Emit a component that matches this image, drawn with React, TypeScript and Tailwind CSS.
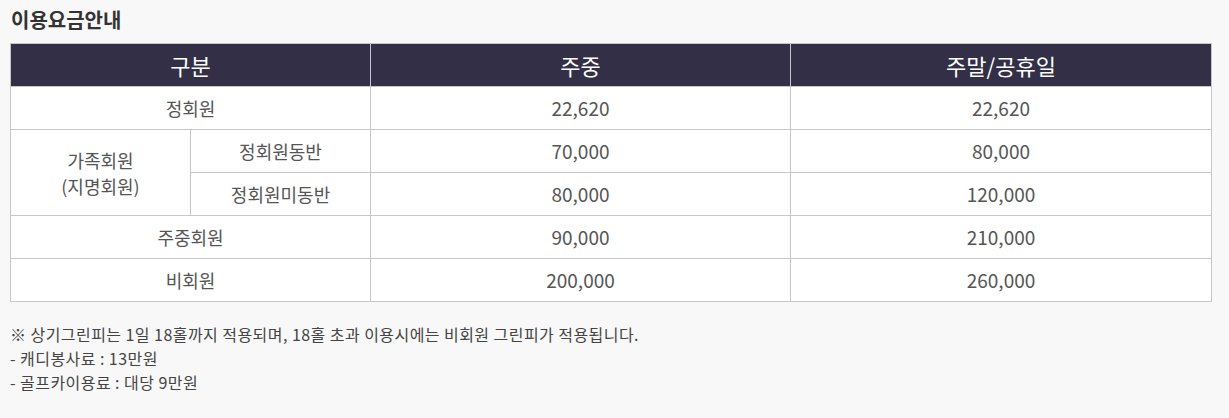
const font = { fontFamily: '"Noto Sans CJK KR", "Noto Sans", sans-serif' };

type Row = { label: string; sub?: string; weekday: string; weekend: string };

const rows: Row[] = [
  { label: "정회원", weekday: "22,620", weekend: "22,620" },
  { label: "가족회원", sub: "정회원동반", weekday: "70,000", weekend: "80,000" },
  { label: "가족회원", sub: "정회원미동반", weekday: "80,000", weekend: "120,000" },
  { label: "주중회원", weekday: "90,000", weekend: "210,000" },
  { label: "비회원", weekday: "200,000", weekend: "260,000" },
];

const cell = "h-[43px] border border-[#c6c6c6] bg-white text-center align-middle text-[#555]";
const label = cell + " text-[18px]";
const num = cell + " text-[19px]";
const th = "h-[43px] border border-[#c6c6c6] bg-[#332f46] text-[22px] font-normal text-white";

export default function App() {
  return (
    <div className="min-h-[418px] w-[1229px] bg-[#f8f8f8]" style={font}>
      <h2 className="pl-[11px] pt-[6px] text-[20px] font-bold leading-[28px] text-[#333]">
        이용요금안내
      </h2>
      <table className="ml-[10px] mt-[9px] w-[1201px] table-fixed border-collapse">
        <colgroup>
          <col className="w-[180px]" />
          <col className="w-[180px]" />
          <col className="w-[420px]" />
          <col className="w-[421px]" />
        </colgroup>
        <thead>
          <tr>
            <th colSpan={2} className={th}>
              구분
            </th>
            <th className={th}>주중</th>
            <th className={th}>주말/공휴일</th>
          </tr>
        </thead>
        <tbody>
          {rows.map((r, i) => (
            <tr key={i}>
              {r.sub ? (
                <>
                  {i === 1 && (
                    <td rowSpan={2} className={label + " leading-[26px]"}>
                      가족회원
                      <br />
                      (지명회원)
                    </td>
                  )}
                  <td className={label}>{r.sub}</td>
                </>
              ) : (
                <td colSpan={2} className={label}>
                  {r.label}
                </td>
              )}
              <td className={num}>{r.weekday}</td>
              <td className={num}>{r.weekend}</td>
            </tr>
          ))}
        </tbody>
      </table>
      <div className="ml-[10px] mt-[20px] text-[16px] leading-[24px] tracking-[0.45px] text-[#444]">
        <p>※ 상기그린피는 1일 18홀까지 적용되며, 18홀 초과 이용시에는 비회원 그린피가 적용됩니다.</p>
        <p>- 캐디봉사료 : 13만원</p>
        <p>- 골프카이용료 : 대당 9만원</p>
      </div>
    </div>
  );
}
